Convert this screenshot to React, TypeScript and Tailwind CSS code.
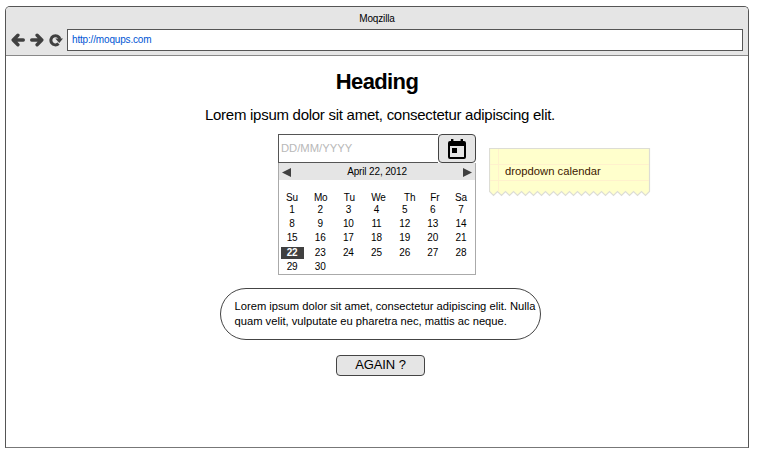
import React from "react";

const weekdays = [
  { label: "Su", shift: "translate-x-0" },
  { label: "Mo", shift: "translate-x-[0.5px]" },
  { label: "Tu", shift: "translate-x-[1px]" },
  { label: "We", shift: "translate-x-[2px]" },
  { label: "Th", shift: "translate-x-[5px]" },
  { label: "Fr", shift: "translate-x-[2px]" },
  { label: "Sa", shift: "translate-x-0" },
];

const days = Array.from({ length: 30 }, (_, i) => i + 1);

// Torn lower edge of the note: 20 teeth, each 8px wide, drawn right to left.
const tornEdge = Array.from({ length: 20 }, (_, i) => {
  const x = 160.5 - i * 8;
  return `L${x - 4} 47.5L${x - 8} 43.5`;
}).join("");

function BackIcon() {
  return (
    <svg width="14" height="14" viewBox="0 0 14 14" fill="none" stroke="#404040" strokeWidth="3.4" strokeLinejoin="round" strokeLinecap="round">
      <path d="M12.3 7H3M6.9 2.3L2.2 7L6.9 11.7" />
    </svg>
  );
}

function ForwardIcon() {
  return (
    <svg width="14" height="14" viewBox="0 0 14 14" fill="none" stroke="#404040" strokeWidth="3.4" strokeLinejoin="round" strokeLinecap="round">
      <path d="M1.7 7H11M7.1 2.3L11.8 7L7.1 11.7" />
    </svg>
  );
}

function ReloadIcon() {
  return (
    <svg width="14" height="14" viewBox="0 0 14 14">
      <path d="M9.6 10.7A4.6 4.6 0 1 1 10.9 6" fill="none" stroke="#404040" strokeWidth="3" />
      <path d="M6.3 5.4H14L10.3 10Z" fill="#404040" />
    </svg>
  );
}

function CalendarIcon() {
  return (
    <svg width="18" height="20" viewBox="0 0 18 20">
      <path
        fillRule="evenodd"
        d="M2 2H3V0H5.4V2H12.6V0H15V2H16Q18 2 18 4V18Q18 20 16 20H2Q0 20 0 18V4Q0 2 2 2ZM2 7V18H16V7Z"
        fill="#000"
      />
      <path d="M4 9H9V14H4Z" fill="#000" />
    </svg>
  );
}

function Browser() {
  return (
    <header className="h-[49px] rounded-t-[4px] border-b border-[#888] bg-[#e5e5e5]">
      <div className="flex h-[22px] items-center justify-center text-[10px] leading-[11px] tracking-[-0.15px]">Moqzilla</div>
      <div className="flex h-[22px] items-center pr-[5px] pl-[5px]">
        <BackIcon />
        <span className="w-[5px]" />
        <ForwardIcon />
        <span className="w-[5px]" />
        <ReloadIcon />
        <div className="ml-[4px] flex h-[22px] flex-1 items-center border border-[#555] bg-white pb-[1px] pl-[4px] text-[10px] leading-[11px] tracking-[-0.17px] text-[#0055d4]">
          http://moqups.com
        </div>
      </div>
    </header>
  );
}

function DatePicker() {
  return (
    <div className="w-[198px]">
      <div className="flex h-[29px]">
        <div className="flex w-[160px] items-center border border-r-0 border-[#555] pl-[2px] text-[11.25px] leading-[13px] text-[#b8b8b8]">
          DD/MM/YYYY
        </div>
        <div className="flex w-[38px] items-center justify-center rounded-[4px] border border-[#444] bg-[#e5e5e5]">
          <CalendarIcon />
        </div>
      </div>
      <div className="h-[112px] border border-t-0 border-[#aaa]">
        <div className="flex h-[17px] items-center justify-between bg-[#e5e5e5] px-[3px] pt-[1px] text-[10px] leading-[12px]">
          <svg width="9" height="9" viewBox="0 0 9 9"><path d="M9 0V9L0 4.5Z" fill="#404040" /></svg>
          <span className="tracking-[-0.15px]">April 22, 2012</span>
          <svg width="9" height="9" viewBox="0 0 9 9"><path d="M0 0V9L9 4.5Z" fill="#404040" /></svg>
        </div>
        <div className="-ml-[1px] grid grid-cols-[repeat(7,28.15px)] pt-[12px] text-center text-[10px] leading-[12px] tracking-[-0.15px]">
          {weekdays.map((day) => (
            <span key={day.label} className={day.shift}>{day.label}</span>
          ))}
        </div>
        <div className="-ml-[1px] grid auto-rows-[14.2px] grid-cols-[repeat(7,28.15px)] text-center text-[10px] leading-[12px] tracking-[-0.15px]">
          {days.map((day) =>
            day === 22 ? (
              <span key={day} className="mx-[2.5px] h-[12px] bg-[#404040] font-bold text-white">{day}</span>
            ) : (
              <span key={day}>{day}</span>
            ),
          )}
        </div>
      </div>
    </div>
  );
}

function StickyNote() {
  return (
    <div className="relative mt-[14px] ml-[13px] h-[49px] w-[162px]">
      <svg className="absolute inset-0" width="162" height="49" viewBox="0 0 162 49">
        <path d={`M0.5 0.5H160.5V43.5${tornEdge}Z`} fill="#ffffcc" stroke="#ddddd5" strokeWidth="1.2" />
        <path d="M1 16.5H160M1 32.5H160M9.5 1V44" stroke="#fff1cc" />
      </svg>
      <div className="relative pt-[17px] pl-[16px] text-[11.25px] leading-[13px] text-[#402000]">dropdown calendar</div>
    </div>
  );
}

export default function App() {
  return (
    <div className="h-[458px] w-[757px] bg-white pt-[6px] pl-[5px] font-['Liberation_Sans',Arial,sans-serif] text-black">
      <div className="h-[442px] w-[744px] rounded-t-[5px] border border-[#555] border-b-[#777] whitespace-nowrap">
        <Browser />
        <main className="flex flex-col items-center">
          <h1 className="mt-[13px] h-[26px] text-[22px] leading-[26px] font-bold tracking-[-0.6px]">Heading</h1>
          <p className="mt-[11px] ml-[6px] h-[18px] text-[15px] leading-[18px] tracking-[-0.27px]">
            Lorem ipsum dolor sit amet, consectetur adipiscing elit.
          </p>
          <div className="mt-[10px] flex w-full items-start pl-[272px]">
            <DatePicker />
            <StickyNote />
          </div>
          <div className="mt-[13px] ml-[7px] h-[52px] w-[321px] rounded-[26px] border border-[#444] pt-[10px] pl-[13.5px] text-[11.2px] leading-[15px]">
            Lorem ipsum dolor sit amet, consectetur adipiscing elit. Nulla
            <br />
            quam velit, vulputate eu pharetra nec, mattis ac neque.
          </div>
          <button className="mt-[15px] ml-[7px] flex h-[21px] w-[89px] items-center justify-center rounded-[4px] border border-[#444] bg-[#e5e5e5] pb-[2px] text-[13px] leading-[15px] tracking-[-0.1px]">
            AGAIN ?
          </button>
        </main>
      </div>
    </div>
  );
}
